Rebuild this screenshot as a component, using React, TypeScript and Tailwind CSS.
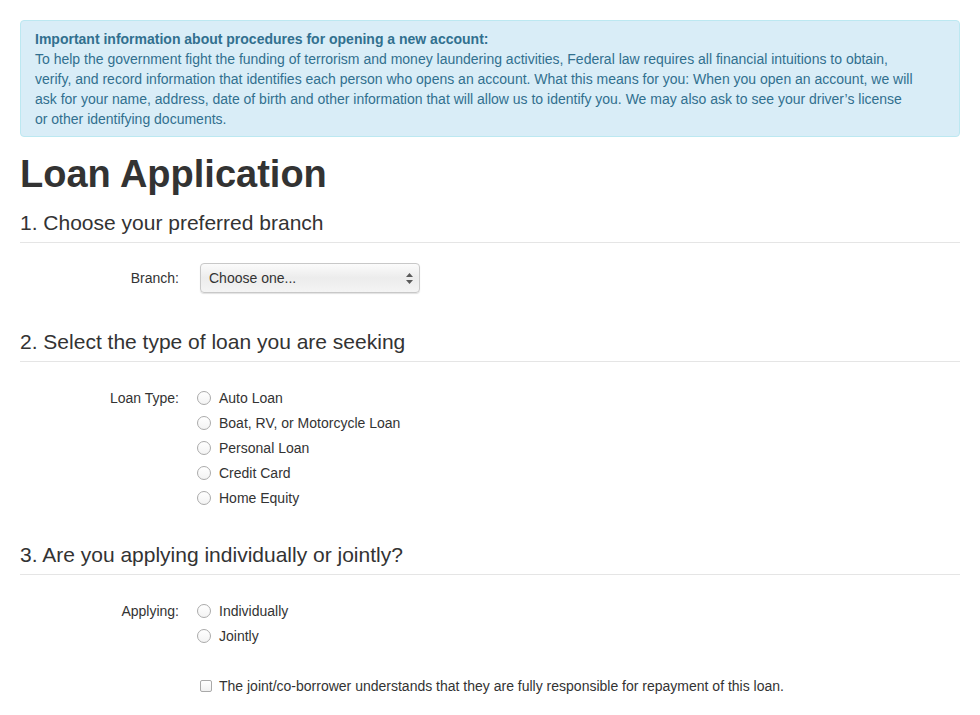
import React from "react";

const loanTypes = ["Auto Loan", "Boat, RV, or Motorcycle Loan", "Personal Loan", "Credit Card", "Home Equity"];
const applying = ["Individually", "Jointly"];

const noticeLines = [
  "To help the government fight the funding of terrorism and money laundering activities, Federal law requires all financial intuitions to obtain,",
  "verify, and record information that identifies each person who opens an account. What this means for you: When you open an account, we will",
  "ask for your name, address, date of birth and other information that will allow us to identify you. We may also ask to see your driver\u2019s license",
  "or other identifying documents.",
];

function Legend({ children, className = "" }: { children: React.ReactNode; className?: string }) {
  return (
    <h2 className={`h-[35px] leading-[30px] pb-[4px] border-b border-[#e5e5e5] text-[21px] text-[#333] ${className}`}>
      {children}
    </h2>
  );
}

function Radio({ name, label }: { name: string; label: string }) {
  return (
    <label className="flex items-center h-[20px] text-[14px] text-[#333] cursor-pointer">
      <input
        type="radio"
        name={name}
        className="appearance-none -ml-[3px] mr-[8px] w-[14px] h-[14px] rounded-full border border-[#ababab] bg-gradient-to-b from-white to-[#f3f3f3] checked:border-[#3b8ee8] checked:border-[4px]"
      />
      {label}
    </label>
  );
}

export default function App() {
  return (
    <div className="px-[20px] pt-[20px] pb-[40px] bg-white font-['Liberation_Sans',Arial,sans-serif] text-[14px] leading-[20px] text-[#333]">
      <div className="border border-[#bce8f1] bg-[#d9edf7] rounded-[4px] pl-[14px] pr-[20px] pt-[8px] pb-[7px] text-[#31708f]">
        <p className="font-bold">Important information about procedures for opening a new account:</p>
        {noticeLines.map((line) => (
          <p key={line} className="whitespace-nowrap">{line}</p>
        ))}
      </div>

      <h1 className="mt-[16px] text-[38px] leading-[42px] font-bold text-[#333]">Loan Application</h1>

      <Legend className="mt-[13px]">1. Choose your preferred branch</Legend>

      <div className="mt-[20px] flex items-center">
        <span className="w-[160px] pr-[1px] text-right">Branch:</span>
        <div className="ml-[20px] relative w-[220px] h-[30px]">
          <select className="appearance-none w-full h-full rounded-[4px] border border-[#c8c8c8] bg-gradient-to-b from-[#fbfbfb] via-[#ececec] to-[#f4f4f4] shadow-[0_1px_1px_rgba(0,0,0,0.12)] pl-[8px] text-[14px] text-[#333] outline-none">
            <option>Choose one...</option>
          </select>
          <svg className="absolute right-[7px] top-[10px] pointer-events-none" width="7" height="11" viewBox="0 0 7 11">
            <path d="M3.5 0 L7 4 L0 4 Z" fill="#5a5a5a" />
            <path d="M3.5 11 L7 7 L0 7 Z" fill="#5a5a5a" />
          </svg>
        </div>
      </div>

      <Legend className="mt-[34px]">2. Select the type of loan you are seeking</Legend>

      <div className="mt-[26px] flex">
        <span className="w-[160px] pr-[1px] text-right leading-[20px]">Loan Type:</span>
        <div className="ml-[20px] flex flex-col gap-[5px]">
          {loanTypes.map((t) => (
            <Radio key={t} name="loanType" label={t} />
          ))}
        </div>
      </div>

      <Legend className="mt-[32px]">3. Are you applying individually or jointly?</Legend>

      <div className="mt-[26px] flex">
        <span className="w-[160px] pr-[1px] text-right leading-[20px]">Applying:</span>
        <div className="ml-[20px] flex flex-col gap-[5px]">
          {applying.map((t) => (
            <Radio key={t} name="applying" label={t} />
          ))}
        </div>
      </div>

      <div className="mt-[30px] ml-[180px]">
        <label className="flex items-center h-[20px] cursor-pointer">
          <input
            type="checkbox"
            className="appearance-none mr-[7px] w-[12px] h-[12px] rounded-[2px] border border-[#a9a9a9] bg-gradient-to-b from-white to-[#f1f1f1] checked:bg-[#3b8ee8]"
          />
          The joint/co-borrower understands that they are fully responsible for repayment of this loan.
        </label>
      </div>
    </div>
  );
}
